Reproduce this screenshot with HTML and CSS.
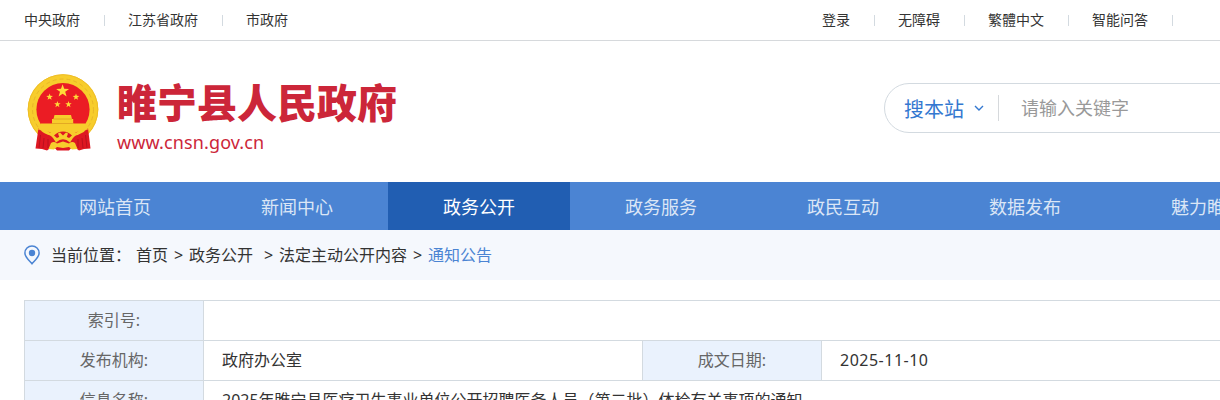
FILE: index.html
```html
<!DOCTYPE html>
<html lang="zh-CN">
<head>
    <meta charset="UTF-8">
    <title>睢宁县人民政府</title>
    <link rel="stylesheet" href="styles.css">
</head>
<body>
    <div class="top-bar">
        <div class="top-links">
            <a>中央政府</a>
            <a>江苏省政府</a>
            <a>市政府</a>
        </div>
        <div class="top-links top-right">
            <a>登录</a>
            <a>无障碍</a>
            <a>繁體中文</a>
            <a>智能问答</a>
        </div>
    </div>

    <div class="header">
        <svg class="emblem" viewBox="24 70 78 84">
            <defs>
                <path id="star" d="M0-1L.235-.324.951-.309.38.124.588.809 0 .4-.588.809-.38.124-.951-.309-.235-.324Z"/>
            </defs>
            <circle cx="63" cy="109.5" r="35.3" fill="#f7cd2c"/>
            <circle cx="63" cy="109.5" r="34.8" fill="none" stroke="#efbd28" stroke-width="1"/>
            <circle cx="63" cy="109.5" r="30.5" fill="none" stroke="#e9b628" stroke-width="1" stroke-dasharray="4 3"/>
            <circle cx="63" cy="109.5" r="26.6" fill="#eb1c24"/>
            <!-- ribbon -->
            <path d="M38.500 128Q45 137 63 137T88 128L90.500 148.500 84 149 79 150.500 73 146 69 150.500H57L53 146 47 150.500 42 149 35.500 148.500Z" fill="#de1722"/>
            <path d="M40.500 135L39 148M44 138L43 148M85.500 135L87 148M82 138L83 148M48 139V148M78 139V148" stroke="#b5101d" stroke-width=".9" fill="none"/>
            <!-- gate tower -->
            <path d="M54.500 115H71L72 119H73.200V123.500H85.500L88 129.500Q76 131 74 134L63 130 52 134Q50 131 38 129.500L41 123.500H52V119H53.500Z" fill="#f7cd2c"/>
            <path d="M53.500 119H72M52 123.500H74" stroke="#dda021" stroke-width=".8"/>
            <!-- cog wheel and wheat stems -->
            <path d="M49 134Q54 129 63 129T77 134L73 138 70 142.500Q63 136 56 142.500L53 138Z" fill="#f7cd2c"/>
            <path d="M54 135.500Q58 131.500 63 131.500T72 135.500L69 138Q63 134 57 138Z" fill="#de1722"/>
            <path d="M58 133.500L60 132.500 63 135.500 66 132.500 68 133.500 66 139H60Z" fill="#f7cd2c"/>
            <path d="M48.500 149L51 143Q54 141 57 143.500L63 141.500 69 143.500Q72 141 75 143L77.500 149 72 149.500 69 147 63 148 57 147 54 149.500Z" fill="#f7cd2c"/>
            <g fill="#ffdc38">
                <use href="#star" transform="translate(62.6 91) scale(6.8)"/>
                <use href="#star" transform="translate(49.6 97) scale(3.5)"/>
                <use href="#star" transform="translate(76 97) scale(3.5)"/>
                <use href="#star" transform="translate(57.4 104.4) scale(3.4)"/>
                <use href="#star" transform="translate(68.5 104.4) scale(3.4)"/>
            </g>
        </svg>
        <div class="site-name">
            <h1>睢宁县人民政府</h1>
            <div class="site-url">www.cnsn.gov.cn</div>
        </div>
        <div class="search">
            <span class="search-type">搜本站</span>
            <svg class="arrow" viewBox="0 0 10 6"><path d="M1 1l4 4 4-4" fill="none" stroke="#3478d0" stroke-width="1.4"/></svg>
            <span class="search-input">请输入关键字</span>
        </div>
    </div>

    <div class="nav">
        <a>网站首页</a>
        <a>新闻中心</a>
        <a class="active">政务公开</a>
        <a>政务服务</a>
        <a>政民互动</a>
        <a>数据发布</a>
        <a>魅力睢宁</a>
    </div>

    <div class="location">
        <svg class="pin" viewBox="0 0 16 20">
            <path d="M8 1C4 1 .9 4.100 .9 8c0 4 4 7.200 7.100 10.800C11.100 15.200 15.100 12 15.100 8 15.100 4.100 12 1 8 1Z" fill="none" stroke="#4b84d3" stroke-width="1.5"/>
            <circle cx="8" cy="8" r="3.2" fill="#4b84d3"/>
        </svg>
        <span class="location-label">当前位置：</span>
        <a>首页</a>
        <span class="sep">&gt;</span>
        <a>政务公开</a>
        <span class="sep sep-wide">&gt;</span>
        <a>法定主动公开内容</a>
        <span class="sep">&gt;</span>
        <a class="current">通知公告</a>
    </div>

    <div class="info-table">
        <div class="label">索引号:</div>
        <div class="value wide"></div>
        <div class="label">发布机构:</div>
        <div class="value">政府办公室</div>
        <div class="label">成文日期:</div>
        <div class="value date">2025-11-10</div>
        <div class="label">信息名称:</div>
        <div class="value wide">2025年睢宁县医疗卫生事业单位公开招聘医务人员（第二批）体检有关事项的通知</div>
    </div>
</body>
</html>
```
FILE: styles.css
```css
* {
    box-sizing: border-box;
}
html {
    overflow: hidden;
}
body {
    margin: 0;
    height: 400px;
    overflow: hidden;
    background: #fff;
    color: #333;
    font-family: "Noto Sans", "Noto Sans CJK SC", sans-serif;
    font-size: 16px;
    white-space: nowrap;
}
.top-bar {
    display: flex;
    justify-content: space-between;
    height: 41px;
    padding-left: 24px;
    border-bottom: 1px solid #d6d9dc;
    font-size: 14px;
    line-height: 40px;
}
.top-links {
    display: flex;
}
.top-links a {
    display: flex;
    align-items: center;
    margin-right: 23px;
}
.top-links a::after {
    content: "";
    width: 1px;
    height: 11px;
    margin-left: 24px;
    background: #d3dae0;
}
.top-links a:last-child::after {
    display: none;
}
.top-right a:last-child::after {
    display: block;
}
.top-right a:last-child {
    margin-right: 47px;
}
.header {
    display: flex;
    height: 141px;
    padding-left: 24px;
}
.emblem {
    width: 78px;
    height: 84px;
    margin-top: 29px;
    flex: none;
}
.site-name {
    width: 767px;
    padding: 37px 0 0 15px;
    color: #cc2639;
    flex: none;
}
.site-name h1 {
    margin: 0;
    font-size: 40px;
    font-weight: 900;
    line-height: 50px;
}
.site-url {
    margin-top: 1px;
    font-size: 18px;
    line-height: 26px;
    letter-spacing: 0.12px;
}
.search {
    display: flex;
    align-items: center;
    width: 380px;
    height: 50px;
    margin: 42px 0 0 15px;
    padding-left: 19px;
    border: 1px solid #d3dae0;
    border-radius: 25px;
    flex: none;
}
.search-type {
    padding-top: 1px;
    color: #3478d0;
    font-size: 20px;
}
.arrow {
    width: 10px;
    height: 6px;
    margin: 0 14px 0 10px;
}
.search-input {
    padding-left: 22px;
    border-left: 1px solid #d6d9dc;
    color: #999;
    font-size: 18px;
    line-height: 26px;
}
.nav {
    display: flex;
    height: 48px;
    padding-left: 24px;
    background: #4b84d3;
}
.nav a {
    width: 182px;
    color: #dbe6f6;
    font-size: 18px;
    line-height: 50px;
    height: 48px;
    text-align: center;
    flex: none;
}
.nav .active {
    background: #215eb2;
    color: #fff;
}
.location {
    display: flex;
    align-items: center;
    height: 50px;
    padding-left: 24px;
    background: #f5f8fd;
    line-height: 51px;
}
.pin {
    width: 16px;
    height: 20px;
    margin-right: 11px;
}
.location-label {
    width: 85px;
}
.sep {
    width: 21px;
    text-align: center;
}
.sep-wide {
    width: 26px;
    padding-left: 5px;
}
.current {
    color: #4b84d3;
}
.info-table {
    display: grid;
    grid-template-columns: 179px 439px 179px 439px;
    grid-auto-rows: 40px;
    width: 1237px;
    margin: 20px 0 0 24px;
    border-top: 1px solid #d3dae0;
    border-left: 1px solid #d3dae0;
}
.label,
.value {
    border-right: 1px solid #d3dae0;
    border-bottom: 1px solid #d3dae0;
    line-height: 39px;
}
.label {
    background: #eaf2fd;
    color: #666;
    text-align: center;
}
.value {
    padding-left: 18px;
}
.wide {
    grid-column: span 3;
}
.date {
    letter-spacing: 0.5px;
}
```
